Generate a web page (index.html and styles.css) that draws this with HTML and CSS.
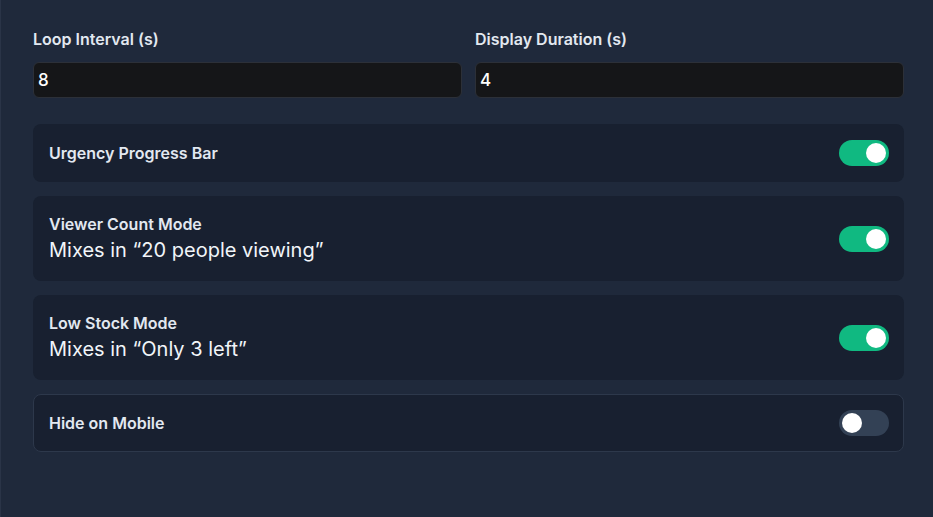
FILE: index.html
```html
<!DOCTYPE html>
<html lang="en">
<head>
    <meta charset="UTF-8">
    <meta name="viewport" content="width=device-width, initial-scale=1.0">
    <title>Urgency Settings</title>
    <link rel="stylesheet" href="styles.css">
</head>
<body>
    <div class="panel">
        <div class="field-row">
            <label class="field">
                <span class="field-label">Loop Interval (s)</span>
                <input class="field-input" type="text" value="8">
            </label>
            <label class="field">
                <span class="field-label">Display Duration (s)</span>
                <input class="field-input" type="text" value="4">
            </label>
        </div>

        <div class="option">
            <div class="option-text">
                <div class="option-title">Urgency Progress Bar</div>
            </div>
            <div class="switch on"><span class="knob"></span></div>
        </div>

        <div class="option">
            <div class="option-text">
                <div class="option-title">Viewer Count Mode</div>
                <div class="option-desc">Mixes in “20 people viewing”</div>
            </div>
            <div class="switch on"><span class="knob"></span></div>
        </div>

        <div class="option">
            <div class="option-text">
                <div class="option-title">Low Stock Mode</div>
                <div class="option-desc">Mixes in “Only 3 left”</div>
            </div>
            <div class="switch on"><span class="knob"></span></div>
        </div>

        <div class="option bordered">
            <div class="option-text">
                <div class="option-title">Hide on Mobile</div>
            </div>
            <div class="switch"><span class="knob"></span></div>
        </div>
    </div>
</body>
</html>
```

FILE: styles.css
```css
html, body {
    margin: 0;
    height: 100%;
}

body {
    background: #1f293b;
    color: #e2e8f0;
    font-family: Inter, "Noto Sans", sans-serif;
    border-left: 1px solid #2a3447;
    box-sizing: border-box;
    overflow: hidden;
}

.panel {
    padding: 29px 29px 0 32px;
    display: flex;
    flex-direction: column;
    gap: 14px;
}

.field-row {
    display: grid;
    grid-template-columns: 1fr 1fr;
    gap: 13px;
    margin-bottom: 12px;
}

.field {
    display: flex;
    flex-direction: column;
    gap: 13px;
}

.field-label {
    font-size: 16px;
    font-weight: 600;
    line-height: 20px;
    color: #e2e8f0;
}

.field-input {
    height: 36px;
    box-sizing: border-box;
    background: #151618;
    border: 1px solid #2c3038;
    border-radius: 6px;
    color: #ffffff;
    font-family: Inter, sans-serif;
    font-size: 17px;
    font-weight: 500;
    padding: 0 4px;
    outline: none;
}

.option {
    display: flex;
    align-items: center;
    justify-content: space-between;
    background: #182030;
    border-radius: 8px;
    padding: 16px 15px 16px 16px;
    min-height: 26px;
}

.option.bordered {
    border: 1px solid #2d384b;
    padding: 15px 14px 15px 15px;
}

.option-title {
    font-size: 16px;
    font-weight: 600;
    line-height: 24px;
    color: #e2e8f0;
}

.option-desc {
    font-size: 20px;
    line-height: 29px;
    color: #f1f5f9;
}

.switch {
    position: relative;
    width: 50px;
    height: 26px;
    border-radius: 13px;
    background: #334155;
    flex-shrink: 0;
}

.switch.on {
    background: #10b981;
}

.knob {
    position: absolute;
    top: 3px;
    left: 3px;
    width: 20px;
    height: 20px;
    border-radius: 50%;
    background: #ffffff;
}

.switch.on .knob {
    left: 27px;
}
```
